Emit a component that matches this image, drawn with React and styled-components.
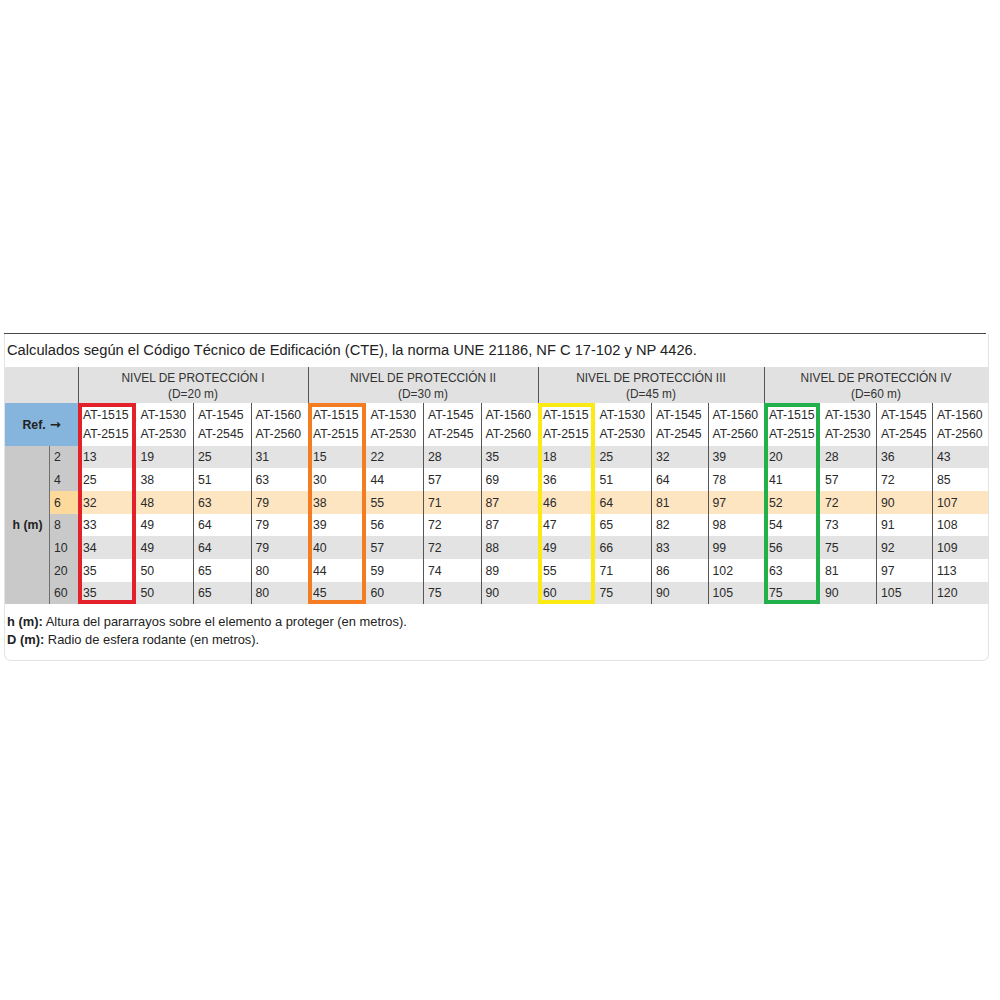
import React from 'react';
import styled, { createGlobalStyle } from 'styled-components';

const Global = createGlobalStyle`
  html, body { margin: 0; padding: 0; background: #fff; }
  body { font-family: "Liberation Sans", Arial, Helvetica, sans-serif; color: #2a2a2a; }
`;

const Page = styled.div`
  padding: 333px 0 0 4px;
  width: 985px;
`;

const Rule = styled.div`
  height: 1px;
  background: #4a4a4a;
  margin-right: 3px;
`;

const Card = styled.div`
  border: 1px solid #e3e3e3;
  border-top: none;
  border-radius: 0 0 7px 7px;
  background: #fff;
`;

const Title = styled.div`
  height: 33px;
  line-height: 33px;
  padding-left: 2px;
  font-size: 14.7px;
  color: #222;
  white-space: nowrap;
`;

const Grid = styled.div`
  display: grid;
  grid-template-columns: 45px 28px repeat(8, 57.5px) repeat(4, 56.5px) repeat(4, 56px);
  grid-template-rows: 36px 43px 22px 23px 23px 22px 23px 23px 22px;
  font-size: 12.3px;
`;

const Corner = styled.div`
  grid-column: span 2;
  background: #e1e1e1;
`;

const GroupHead = styled.div`
  grid-column: span 4;
  background: #e1e1e1;
  box-shadow: inset 1px 0 0 #555;
  display: flex;
  flex-direction: column;
  align-items: center;
  justify-content: center;
  padding-top: 2px;
  font-size: 11.9px;
  line-height: 16px;
  color: #333;
`;

const RefCell = styled.div`
  grid-column: span 2;
  background: #85b5dc;
  display: flex;
  align-items: center;
  justify-content: center;
  gap: 4px;
  font-weight: bold;
  font-size: 12.3px;
  color: #222;
`;

const Arrow = styled.span`
  font-family: "DejaVu Sans", sans-serif;
  font-weight: bold;
  font-size: 13px;
  line-height: 1;
`;

const frame = ({ $box, $top, $bottom, $line }) => {
  const s = [];
  if ($box) {
    s.push(`inset 4px 0 0 ${$box}`, `inset -4px 0 0 ${$box}`);
    if ($top) s.push(`inset 0 4px 0 ${$box}`);
    if ($bottom) s.push(`inset 0 -4px 0 ${$box}`);
  } else if ($line) {
    s.push('inset 1px 0 0 #555');
  }
  return s.length ? s.join(', ') : 'none';
};

const AtCell = styled.div`
  background: #fff;
  box-shadow: ${frame};
  display: flex;
  flex-direction: column;
  justify-content: center;
  padding-left: 5px;
  font-size: 12.3px;
  line-height: 19px;
  white-space: nowrap;
  color: #2a2a2a;
`;

const HLabel = styled.div`
  grid-row: span 7;
  background: #c9c9c9;
  box-shadow: inset -1px 0 0 #6f6f6f;
  display: flex;
  align-items: center;
  justify-content: center;
  font-weight: bold;
  color: #222;
`;

const HVal = styled.div`
  background: ${({ $hl }) => ($hl ? '#fdd99c' : '#c9c9c9')};
  display: flex;
  align-items: center;
  padding-left: 4px;
  color: #2a2a2a;
`;

const Val = styled.div`
  background: ${({ $bg }) => $bg};
  box-shadow: ${frame};
  display: flex;
  align-items: center;
  padding-left: 5px;
  color: #2a2a2a;
`;

const Notes = styled.div`
  padding: 9px 2px 11px;
  font-size: 12.9px;
  line-height: 18px;
  color: #222;
`;

const NoteLine = styled.div`
  white-space: nowrap;
`;

const GROUPS = [
  { title: 'NIVEL DE PROTECCIÓN I', d: '(D=20 m)', color: '#e3212a' },
  { title: 'NIVEL DE PROTECCIÓN II', d: '(D=30 m)', color: '#f47c22' },
  { title: 'NIVEL DE PROTECCIÓN III', d: '(D=45 m)', color: '#fbea14' },
  { title: 'NIVEL DE PROTECCIÓN IV', d: '(D=60 m)', color: '#22b04b' },
];

const MODELS = [
  ['AT-1515', 'AT-2515'],
  ['AT-1530', 'AT-2530'],
  ['AT-1545', 'AT-2545'],
  ['AT-1560', 'AT-2560'],
];

const ROWS = [
  { h: '2', bg: '#e3e3e3', v: [13, 19, 25, 31, 15, 22, 28, 35, 18, 25, 32, 39, 20, 28, 36, 43] },
  { h: '4', bg: '#ffffff', v: [25, 38, 51, 63, 30, 44, 57, 69, 36, 51, 64, 78, 41, 57, 72, 85] },
  { h: '6', bg: '#fee5c1', hl: true, v: [32, 48, 63, 79, 38, 55, 71, 87, 46, 64, 81, 97, 52, 72, 90, 107] },
  { h: '8', bg: '#ffffff', v: [33, 49, 64, 79, 39, 56, 72, 87, 47, 65, 82, 98, 54, 73, 91, 108] },
  { h: '10', bg: '#e3e3e3', v: [34, 49, 64, 79, 40, 57, 72, 88, 49, 66, 83, 99, 56, 75, 92, 109] },
  { h: '20', bg: '#ffffff', v: [35, 50, 65, 80, 44, 59, 74, 89, 55, 71, 86, 102, 63, 81, 97, 113] },
  { h: '60', bg: '#e3e3e3', v: [35, 50, 65, 80, 45, 60, 75, 90, 60, 75, 90, 105, 75, 90, 105, 120] },
];

export default function App() {
  return (
    <>
      <Global />
      <Page>
        <Rule />
        <Card>
          <Title>
            Calculados según el Código Técnico de Edificación (CTE), la norma UNE 21186, NF C 17-102 y NP 4426.
          </Title>
          <Grid>
            <Corner />
            {GROUPS.map((g) => (
              <GroupHead key={g.title}>
                <span>{g.title}</span>
                <span>{g.d}</span>
              </GroupHead>
            ))}
            <RefCell>
              <span>Ref.</span>
              <Arrow>→</Arrow>
            </RefCell>
            {GROUPS.map((g, gi) =>
              MODELS.map((m, mi) => (
                <AtCell
                  key={`${gi}-${mi}`}
                  $box={mi === 0 ? g.color : null}
                  $top
                  $line={mi >= 2}
                >
                  <span>{m[0]}</span>
                  <span>{m[1]}</span>
                </AtCell>
              ))
            )}
            {ROWS.map((r, ri) => (
              <React.Fragment key={r.h}>
                {ri === 0 && <HLabel>h (m)</HLabel>}
                <HVal $hl={r.hl}>{r.h}</HVal>
                {r.v.map((val, ci) => {
                  const mi = ci % 4;
                  const g = GROUPS[Math.floor(ci / 4)];
                  return (
                    <Val
                      key={ci}
                      $bg={r.bg}
                      $box={mi === 0 ? g.color : null}
                      $bottom={ri === ROWS.length - 1}
                      $line={mi >= 2}
                    >
                      {val}
                    </Val>
                  );
                })}
              </React.Fragment>
            ))}
          </Grid>
          <Notes>
            <NoteLine>
              <b>h (m):</b> Altura del pararrayos sobre el elemento a proteger (en metros).
            </NoteLine>
            <NoteLine>
              <b>D (m):</b> Radio de esfera rodante (en metros).
            </NoteLine>
          </Notes>
        </Card>
      </Page>
    </>
  );
}
